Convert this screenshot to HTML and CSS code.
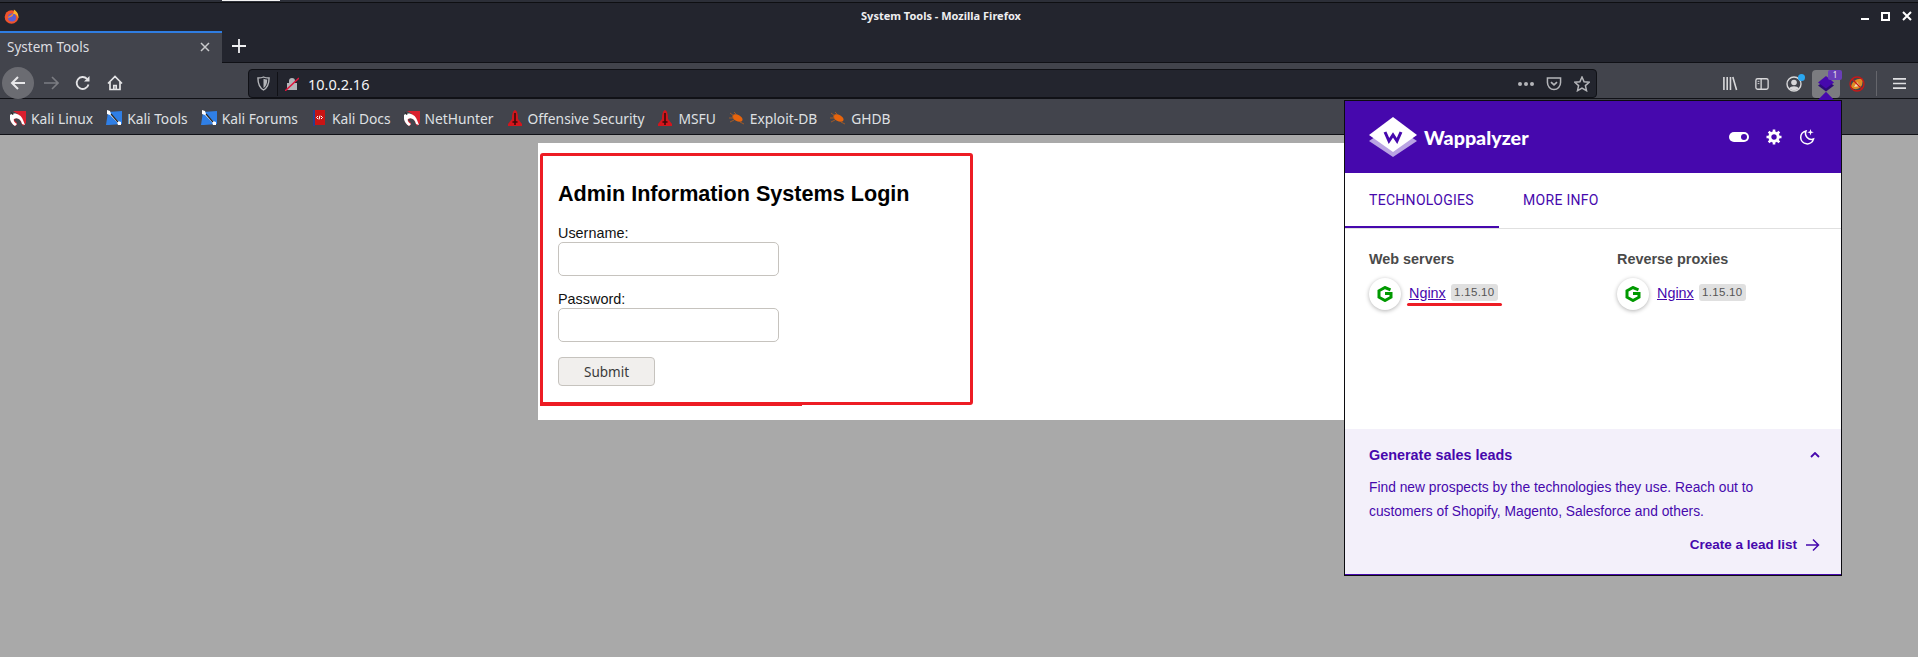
FILE: index.html
```html
<!DOCTYPE html>
<html lang="en">
<head>
    <meta charset="UTF-8">
    <title>System Tools - Mozilla Firefox</title>
    <link rel="stylesheet" href="styles.css">
</head>
<body>
    <svg class="defs" width="0" height="0">
        <symbol id="kali" viewBox="0 0 16 16">
            <path d="M3 1 L16 1 L16 13 L13 16 L11 12 C10 8 6 7 4 10 L7 13 L6 16 C2 15 0 11 1 8 C2 6 5 4 8 4 L3 1 Z" fill="#d9202e"/>
            <path d="M0 5 C4 2 11 4 13 10 L15 15 L12 14 C11 9 7 7 4 9 C3 11 5 13 7 14 L5 16 C1 14 -1 9 0 5 Z" fill="#fff"/>
            <path d="M1 2 L4 4 L2 5 Z" fill="#222"/>
        </symbol>
        <symbol id="tools" viewBox="0 0 16 16">
            <path d="M2 2 L16 1 L16 14 L3 15 L0 15 Z" fill="#2f7fe6"/>
            <path d="M1 0 L4 1 L5 4 L12 11 L15 12 L15 15 L12 15 L11 12 L4 5 L1 4 Z" fill="#fff"/>
            <path d="M5 4 L12 12" stroke="#222" stroke-width="1.2"/>
        </symbol>
        <symbol id="book" viewBox="0 0 16 16">
            <rect x="2" y="0" width="12" height="15" fill="#c91414"/>
            <rect x="2" y="0" width="2" height="16" fill="#27408f"/>
            <path d="M7 6 L5.5 7.5 L7 9 M10 6 L11.5 7.5 L10 9 M9 5.500 L8 9.500" stroke="#fff" stroke-width="1" fill="none"/>
        </symbol>
        <symbol id="rocket" viewBox="0 0 16 16">
            <path d="M8 0 C10.500 1 11 5 11 9 L15 14 L15 16 L1 16 L1 14 L5 9 C5 5 5.500 1 8 0 Z" fill="#d4141c"/>
            <path d="M8 3 L8 15 M5.500 12 L10.500 12" stroke="#3a0a0a" stroke-width="1.6"/>
        </symbol>
        <symbol id="bug" viewBox="0 0 16 16">
            <ellipse cx="8.500" cy="8" rx="5.500" ry="3.200" transform="rotate(28 8.500 8)" fill="#e8640c"/>
            <path d="M1 3 L5 6 M0 8 L5 8 M1 12 L5 10 M11 12 L15 14 M5 2 L8 5" stroke="#b5601f" stroke-width=".8"/>
        </symbol>
        <symbol id="nginx" viewBox="0 0 16 16">
            <path d="M13.500 3.800 L8 1.500 L2 4.800 L2 11.200 L8 14.500 L14 11.200 L14 7.500 L8 7.500" fill="none" stroke="#009900" stroke-width="3"/>
        </symbol>
    </svg>

    <div class="top-strip"><span class="strip-lit"></span></div>

    <header class="titlebar">
        <svg class="ff-logo" viewBox="0 0 16 16" width="15" height="15">
            <circle cx="8" cy="8.500" r="7.300" fill="#f0532c"/>
            <circle cx="8.500" cy="9" r="4.300" fill="#5a5fd6"/>
            <path d="M10.500 .5 C14 2.500 16 6 15.300 10.500 C14.500 7 12.500 5 9.500 5 C10.500 4 10.800 2 10.500 .5 Z" fill="#fdb32b"/>
            <path d="M4 9 C5 7 8 7 9 5 C11 6 9 8 7 8.500 C6 9 5 10 4 9 Z" fill="#f98a2a"/>
        </svg>
        <span class="window-title">System Tools - Mozilla Firefox</span>
        <div class="window-ctrls">
            <span class="ctrl-min"></span>
            <span class="ctrl-max"></span>
            <svg viewBox="0 0 10 10" width="10" height="10"><path d="M1 1 L9 9 M9 1 L1 9" stroke="#fff" stroke-width="2"/></svg>
        </div>
    </header>

    <div class="tabbar">
        <div class="tab">
            <span class="tab-label">System Tools</span>
            <svg viewBox="0 0 10 10" width="10" height="10"><path d="M1 1 L9 9 M9 1 L1 9" stroke="#c9cacc" stroke-width="1.500"/></svg>
        </div>
        <svg class="new-tab" viewBox="0 0 14 14" width="14" height="14"><path d="M7 0 V14 M0 7 H14" stroke="#f0f0f2" stroke-width="1.800"/></svg>
    </div>

    <div class="navbar">
        <div class="back-btn">
            <svg viewBox="0 0 16 16" width="16" height="16"><path d="M15 8 H2 M8 2 L2 8 L8 14" fill="none" stroke="#e8e8ea" stroke-width="2"/></svg>
        </div>
        <svg class="nav-icon fwd" viewBox="0 0 16 16" width="16" height="16"><path d="M15 8 H1 M9 2 L15 8 L9 14" fill="none" stroke="#7b7c82" stroke-width="1.600"/></svg>
        <svg class="nav-icon" viewBox="0 0 16 16" width="16" height="16"><path d="M13.500 9.500 A6 6 0 1 1 12 3.800" fill="none" stroke="#e4e4e6" stroke-width="1.800"/><path d="M14.500 1 V6.500 H9 Z" fill="#e4e4e6"/></svg>
        <svg class="nav-icon" viewBox="0 0 16 16" width="16" height="16"><path d="M1 8.500 L8 1.500 L15 8.500 M3 7 V14.500 H13 V7 M6.800 14.500 V10.500 H9.200 V14.500" fill="none" stroke="#e4e4e6" stroke-width="1.700"/></svg>

        <div class="urlbar">
            <svg class="url-shield" viewBox="0 0 14 16" width="13" height="15"><path d="M1 2 C4 2 6 1.500 7 1 C8 1.500 10 2 13 2 C13 8 12 12 7 15 C2 12 1 8 1 2 Z" fill="none" stroke="#b4b5b9" stroke-width="1.500"/><path d="M7 3 C8 3.400 9.500 3.800 11 3.800 C11 8 10 11 7 13 Z" fill="#b4b5b9"/></svg>
            <span class="url-sep"></span>
            <svg class="url-lock" viewBox="0 0 14 14" width="14" height="14"><path d="M4 6 V4 A3 3 0 0 1 10 4 V6 M2 6 H12 V13 H2 Z" fill="#b4b5b9"/><path d="M0 14 L14 1" stroke="#e0143c" stroke-width="1.500"/></svg>
            <span class="url-text">10.0.2.16</span>
            <span class="url-dots"><i></i><i></i><i></i></span>
            <svg class="url-icon" viewBox="0 0 16 16" width="16" height="15"><path d="M1 2 H15 V7 C15 11 12 14.500 8 14.500 C4 14.500 1 11 1 7 Z" fill="none" stroke="#b4b5b9" stroke-width="1.600"/><path d="M4.800 6.500 L8 9.500 L11.200 6.500" fill="none" stroke="#b4b5b9" stroke-width="1.800"/></svg>
            <svg class="url-icon" viewBox="0 0 16 16" width="16" height="16"><path d="M8 1 L10.100 5.700 L15.200 6.200 L11.400 9.600 L12.500 14.700 L8 12.100 L3.500 14.700 L4.600 9.600 L.8 6.200 L5.900 5.700 Z" fill="none" stroke="#b4b5b9" stroke-width="1.500"/></svg>
        </div>

        <div class="nav-right">
            <svg class="tb-icon" viewBox="0 0 16 16" width="16" height="15"><path d="M1.500 1 V15 M5 1 V15 M8.500 1 V15 M11 1 L15 15" stroke="#d8d8da" stroke-width="1.700" fill="none"/></svg>
            <svg class="tb-icon" viewBox="0 0 16 16" width="16" height="14"><rect x="1" y="2" width="14" height="12" rx="2" fill="none" stroke="#d8d8da" stroke-width="1.500"/><path d="M7 2 V14" stroke="#d8d8da" stroke-width="1.500"/><path d="M3 5 H5 M3 7.500 H5" stroke="#d8d8da"/></svg>
            <div class="account">
                <svg viewBox="0 0 16 16" width="16" height="16"><circle cx="8" cy="8" r="7" fill="none" stroke="#d8d8da" stroke-width="1.400"/><circle cx="8" cy="6.500" r="2.800" fill="#d8d8da"/><path d="M3 12.500 C5 9.500 11 9.500 13 12.500 C11 14.800 5 14.800 3 12.500 Z" fill="#d8d8da"/></svg>
                <span class="account-dot"></span>
            </div>
            <div class="wap-btn">
                <svg viewBox="0 0 16 16" width="16" height="16"><path d="M0 9.500 L8 4 L16 9.500 L8 15.500 Z" fill="#2d0a78"/><path d="M8 0 L16 6.500 L8 12.500 L0 6.500 Z" fill="#4608ad"/></svg>
                <span class="wap-badge">1</span>
            </div>
            <svg class="fox-icon" viewBox="0 0 16 16" width="16" height="16"><path d="M2 11 C3 5 8 2 14 3 L13 9 C11 13 6 15 2 11 Z" fill="#e08a24"/><path d="M5 11 L8 6 L11 10 Z" fill="#f7e0b8"/><circle cx="8" cy="8" r="7" fill="none" stroke="#c81818" stroke-width="1.300"/><path d="M3 3 L13 13" stroke="#c81818" stroke-width="1.300"/></svg>
            <span class="tb-sep"></span>
            <svg class="tb-icon" viewBox="0 0 14 14" width="13" height="13"><path d="M0 2 H14 M0 7 H14 M0 12 H14" stroke="#e0e0e2" stroke-width="1.800"/></svg>
        </div>
    </div>

    <nav class="bookmarks">
        <a class="bm"><svg width="16" height="16"><use href="#kali"/></svg>Kali Linux</a>
        <a class="bm"><svg width="16" height="16"><use href="#tools"/></svg>Kali Tools</a>
        <a class="bm"><svg width="16" height="16"><use href="#tools"/></svg>Kali Forums</a>
        <a class="bm"><svg width="16" height="16"><use href="#book"/></svg>Kali Docs</a>
        <a class="bm"><svg width="16" height="16"><use href="#kali"/></svg>NetHunter</a>
        <a class="bm"><svg width="16" height="16"><use href="#rocket"/></svg>Offensive Security</a>
        <a class="bm"><svg width="16" height="16"><use href="#rocket"/></svg>MSFU</a>
        <a class="bm"><svg width="16" height="16"><use href="#bug"/></svg>Exploit-DB</a>
        <a class="bm"><svg width="16" height="16"><use href="#bug"/></svg>GHDB</a>
    </nav>

    <main class="page">
        <div class="login-wrap">
            <h2>Admin Information Systems Login</h2>
            <form>
                <label for="user">Username:</label>
                <input type="text" id="user">
                <label for="pass">Password:</label>
                <input type="password" id="pass">
                <button type="button">Submit</button>
            </form>
            <div class="red-box"></div>
            <div class="red-box-thick"></div>
        </div>
    </main>

    <div class="caret"></div>
    <aside class="popup">
        <div class="pop-head">
            <svg class="wap-logo" viewBox="0 0 48 40" width="48" height="40">
                <path d="M24 8 L48 24 L24 40 L0 24 Z" fill="#b9a3e3"/>
                <path d="M24 0 L48 18 L24 35 L0 18 Z" fill="#fff"/>
                <path d="M16 15 L20 24 L24 18 L28 24 L32 15" fill="none" stroke="#4608ad" stroke-width="3"/>
            </svg>
            <span class="wap-name">Wappalyzer</span>
            <div class="head-icons">
                <span class="toggle"><span class="toggle-knob"></span></span>
                <svg viewBox="0 0 16 16" width="16" height="16"><circle cx="8" cy="8" r="4.200" fill="none" stroke="#fff" stroke-width="3"/><path d="M8 .5 V3 M8 13 V15.500 M.5 8 H3 M13 8 H15.500 M2.700 2.700 L4.500 4.500 M11.500 11.500 L13.300 13.300 M2.700 13.300 L4.500 11.500 M11.500 4.500 L13.300 2.700" stroke="#fff" stroke-width="2.600"/></svg>
                <svg viewBox="0 0 16 16" width="16" height="16"><path d="M7 2 A6.500 6.500 0 1 0 14.500 10 A6 6 0 0 1 7 2 Z" fill="none" stroke="#fff" stroke-width="1.500"/><path d="M11.500 0 L12.300 2.500 L14.800 3.300 L12.300 4.100 L11.500 6.500 L10.700 4.100 L8.200 3.300 L10.700 2.500 Z" fill="#fff"/></svg>
            </div>
        </div>
        <div class="pop-tabs">
            <span class="pop-tab active">TECHNOLOGIES</span>
            <span class="pop-tab">MORE INFO</span>
        </div>
        <div class="pop-body">
            <div class="tech-col">
                <h3>Web servers</h3>
                <div class="tech-row">
                    <span class="tech-icon"><svg width="16" height="16"><use href="#nginx"/></svg></span>
                    <a class="tech-link">Nginx</a>
                    <span class="tech-ver">1.15.10</span>
                    <span class="red-under"></span>
                </div>
            </div>
            <div class="tech-col">
                <h3>Reverse proxies</h3>
                <div class="tech-row">
                    <span class="tech-icon"><svg width="16" height="16"><use href="#nginx"/></svg></span>
                    <a class="tech-link">Nginx</a>
                    <span class="tech-ver">1.15.10</span>
                </div>
            </div>
        </div>
        <div class="pop-foot">
            <div class="foot-head">
                <strong>Generate sales leads</strong>
                <svg viewBox="0 0 10 6" width="10" height="6"><path d="M1 5 L5 1 L9 5" fill="none" stroke="#4608ad" stroke-width="1.800"/></svg>
            </div>
            <p>Find new prospects by the technologies they use. Reach out to customers of Shopify, Magento, Salesforce and others.</p>
            <a class="foot-link">Create a lead list
                <svg viewBox="0 0 14 14" width="14" height="14"><path d="M0 7 H12.500 M7 1.500 L12.500 7 L7 12.500" fill="none" stroke="#4608ad" stroke-width="1.500"/></svg>
            </a>
        </div>
    </aside>
</body>
</html>
```

FILE: styles.css
```css
* {
    box-sizing: border-box;
}
html, body {
    margin: 0;
    height: 100%;
}
body {
    width: 1918px;
    height: 657px;
    overflow: hidden;
    display: flex;
    flex-direction: column;
    background: #a9a9a9;
    font-family: "Noto Sans", sans-serif;
    position: relative;
}
.defs {
    position: absolute;
}
svg {
    display: block;
    flex: none;
}

/* window chrome */
.top-strip {
    height: 3px;
    background: #2c2f38;
    border-bottom: 1px solid #0e0f12;
    padding-left: 222px;
}
.strip-lit {
    display: block;
    width: 58px;
    height: 1px;
    background: #f4f4f4;
}
.titlebar {
    height: 28px;
    background: #23252e;
    display: flex;
    align-items: center;
    padding: 0 5px 2px 4px;
    position: relative;
}
.window-title {
    position: absolute;
    left: 0;
    right: 36px;
    top: 6px;
    text-align: center;
    color: #eeeef0;
    font-size: 11px;
    line-height: 14px;
    font-weight: 700;
}
.window-ctrls {
    margin-left: auto;
    display: flex;
    align-items: center;
    gap: 12px;
    padding-right: 1px;
}
.ctrl-min {
    width: 8px;
    height: 2px;
    margin-top: 6px;
    background: #fff;
}
.ctrl-max {
    width: 9px;
    height: 9px;
    border: 2px solid #fff;
}
.tabbar {
    height: 32px;
    background: #23252e;
    border-bottom: 1px solid #101116;
    display: flex;
    align-items: flex-start;
}
.tab {
    width: 222px;
    height: 32px;
    background: #42444c;
    border-top: 2px solid #2f7de1;
    display: flex;
    align-items: center;
    justify-content: space-between;
    padding: 0 12px 2px 7px;
    color: #dcdde0;
    font-size: 13.500px;
}
.new-tab {
    margin: 8px 0 0 10px;
}
.navbar {
    height: 35px;
    background: #42444c;
    display: flex;
    align-items: center;
    padding: 5px 0 0 2px;
    position: relative;
}
.back-btn {
    width: 32px;
    height: 32px;
    border-radius: 50%;
    background: #6b6c72;
    display: flex;
    align-items: center;
    justify-content: center;
}
.nav-icon {
    margin-left: 16px;
}
.nav-icon.fwd {
    margin-left: 9px;
}
.urlbar {
    position: absolute;
    left: 248px;
    top: 6px;
    width: 1349px;
    height: 29px;
    background: #23252e;
    border: 1px solid #101116;
    border-radius: 4px;
    display: flex;
    align-items: center;
    padding: 0 6px 0 8px;
}
.url-sep {
    width: 1px;
    height: 24px;
    background: #101116;
    margin: 0 7px 0 7px;
}
.url-lock {
    margin: 0 9px 0 0;
}
.url-text {
    color: #f4f4f6;
    font-size: 14.500px;
}
.url-dots {
    margin-left: auto;
    display: flex;
    gap: 2px;
}
.url-dots i {
    width: 4px;
    height: 4px;
    border-radius: 50%;
    background: #b4b5b9;
}
.url-icon {
    margin-left: 12px;
}
.nav-right {
    position: absolute;
    left: 1722px;
    top: 6px;
    height: 29px;
    display: flex;
    align-items: center;
}
.tb-icon {
    margin-right: 16px;
}
.account {
    position: relative;
    margin-right: 10px;
}
.account-dot {
    position: absolute;
    right: -3px;
    top: -2px;
    width: 7px;
    height: 7px;
    border-radius: 50%;
    background: #2aa7f0;
}
.wap-btn {
    width: 28px;
    height: 28px;
    border-radius: 4px;
    background: #7b7c80;
    display: flex;
    align-items: center;
    justify-content: center;
    position: relative;
}
.wap-badge {
    position: absolute;
    right: -2px;
    top: 0;
    width: 14px;
    height: 10px;
    border-radius: 2px;
    background: #6a3fb8;
    color: #eee;
    font-size: 8px;
    line-height: 10px;
    text-align: center;
}
.fox-icon {
    margin: 0 11px 0 9px;
}
.tb-sep {
    width: 1px;
    height: 25px;
    background: #65666c;
    margin-right: 16px;
}
.bookmarks {
    height: 37px;
    background: #42444c;
    border-bottom: 1px solid #101116;
    border-top: 1px solid #101116;
    display: flex;
    align-items: center;
    padding: 3px 0 0 10px;
    gap: 13px;
}
.bm {
    display: flex;
    align-items: center;
    gap: 5px;
    color: #dfe0e3;
    font-size: 13.800px;
}

/* page under the chrome */
.page {
    flex: 1;
    padding: 8px 0 0 538px;
    font-family: "Liberation Sans", sans-serif;
}
.login-wrap {
    width: 842px;
    height: 277px;
    background: #fff;
    padding: 0 20px;
    position: relative;
}
.login-wrap h2 {
    margin: 0;
    padding-top: 38px;
    font-size: 21.600px;
    line-height: 25px;
    color: #000;
}
.login-wrap form {
    display: flex;
    flex-direction: column;
    align-items: flex-start;
    padding-top: 18px;
}
.login-wrap label {
    font-size: 14.400px;
    line-height: 18px;
    color: #111;
}
.login-wrap input {
    width: 221px;
    height: 34px;
    border: 1px solid #c6c3be;
    border-radius: 5px;
    background: #fff;
    margin: 0 0 14px;
}
.login-wrap button {
    width: 97px;
    height: 29px;
    margin-top: 1px;
    border: 1px solid #c6c3be;
    border-radius: 4px;
    background: #f1efed;
    color: #3a3a3a;
    font-family: "Noto Sans", sans-serif;
    font-size: 13.500px;
}
.red-box {
    position: absolute;
    left: 2px;
    top: 10px;
    width: 433px;
    height: 252px;
    border: 3px solid #ed1c24;
    border-radius: 3px;
}
.red-box-thick {
    position: absolute;
    left: 2px;
    top: 259px;
    width: 262px;
    height: 4px;
    background: #ed1c24;
}

/* wappalyzer popup */
.caret {
    position: absolute;
    left: 1818px;
    top: 92px;
    width: 16px;
    height: 16px;
    background: #4608ad;
    transform: rotate(45deg) scale(.72);
}
.popup {
    position: absolute;
    left: 1344px;
    top: 100px;
    width: 498px;
    height: 476px;
    background: #fff;
    border: 1px solid #0c0c10;
    display: flex;
    flex-direction: column;
    font-family: "Liberation Sans", sans-serif;
    color: #4608ad;
}
.pop-head {
    height: 72px;
    background: #4608ad;
    display: flex;
    align-items: center;
    padding: 0 24px;
}
.wap-name {
    margin-left: 7px;
    color: #fff;
    font-family: Lato, sans-serif;
    font-weight: 900;
    font-size: 19.700px;
}
.head-icons {
    margin-left: auto;
    display: flex;
    align-items: center;
    gap: 17px;
    padding-right: 2px;
}
.toggle {
    width: 20px;
    height: 10px;
    border-radius: 5px;
    background: #fff;
    position: relative;
}
.toggle-knob {
    position: absolute;
    right: 2px;
    top: 2px;
    width: 6px;
    height: 6px;
    border-radius: 50%;
    background: #4608ad;
}
.pop-tabs {
    height: 56px;
    display: flex;
    border-bottom: 1px solid #e0e0e0;
    flex: none;
}
.pop-tab {
    padding: 0 24px;
    height: 55px;
    line-height: 54px;
    font-family: Roboto, sans-serif;
    font-size: 14px;
    letter-spacing: 0.300px;
}
.pop-tab.active {
    width: 154px;
    border-bottom: 2px solid #4608ad;
}
.pop-body {
    flex: 1;
    display: grid;
    grid-template-columns: 248px 1fr;
    padding: 21px 24px 0;
}
.tech-col h3 {
    margin: 0;
    font-size: 14.400px;
    line-height: 18px;
    color: #4a4a4a;
}
.tech-row {
    display: flex;
    align-items: center;
    margin-top: 10px;
    position: relative;
}
.tech-icon {
    width: 32px;
    height: 32px;
    border-radius: 50%;
    background: #fff;
    box-shadow: 0 1px 4px rgba(0, 0, 0, .3);
    display: flex;
    align-items: center;
    justify-content: center;
}
.tech-link {
    margin: -3px 0 0 8px;
    font-size: 14.400px;
    text-decoration: underline;
}
.tech-ver {
    margin: -3px 0 0 5px;
    width: 47px;
    height: 17px;
    line-height: 17px;
    text-align: center;
    border-radius: 3px;
    background: #e0e0e0;
    color: #555;
    font-size: 11.500px;
    letter-spacing: .3px;
}
.red-under {
    position: absolute;
    left: 38px;
    top: 25px;
    width: 95px;
    height: 3px;
    border-radius: 2px;
    background: #ed1c24;
}
.pop-foot {
    height: 146px;
    flex: none;
    background: #f3f0fa;
    border-bottom: 1px solid #4608ad;
    padding: 17px 24px 0;
}
.foot-head {
    display: flex;
    align-items: center;
    justify-content: space-between;
    font-size: 14.400px;
    line-height: 18px;
    margin-right: -3px;
}
.pop-foot p {
    margin: 12px 0 0;
    font-size: 13.800px;
    line-height: 24px;
}
.foot-link {
    display: flex;
    align-items: center;
    justify-content: flex-end;
    gap: 9px;
    margin: 13px -3px 0 0;
    font-size: 13.500px;
    font-weight: 700;
}
```
